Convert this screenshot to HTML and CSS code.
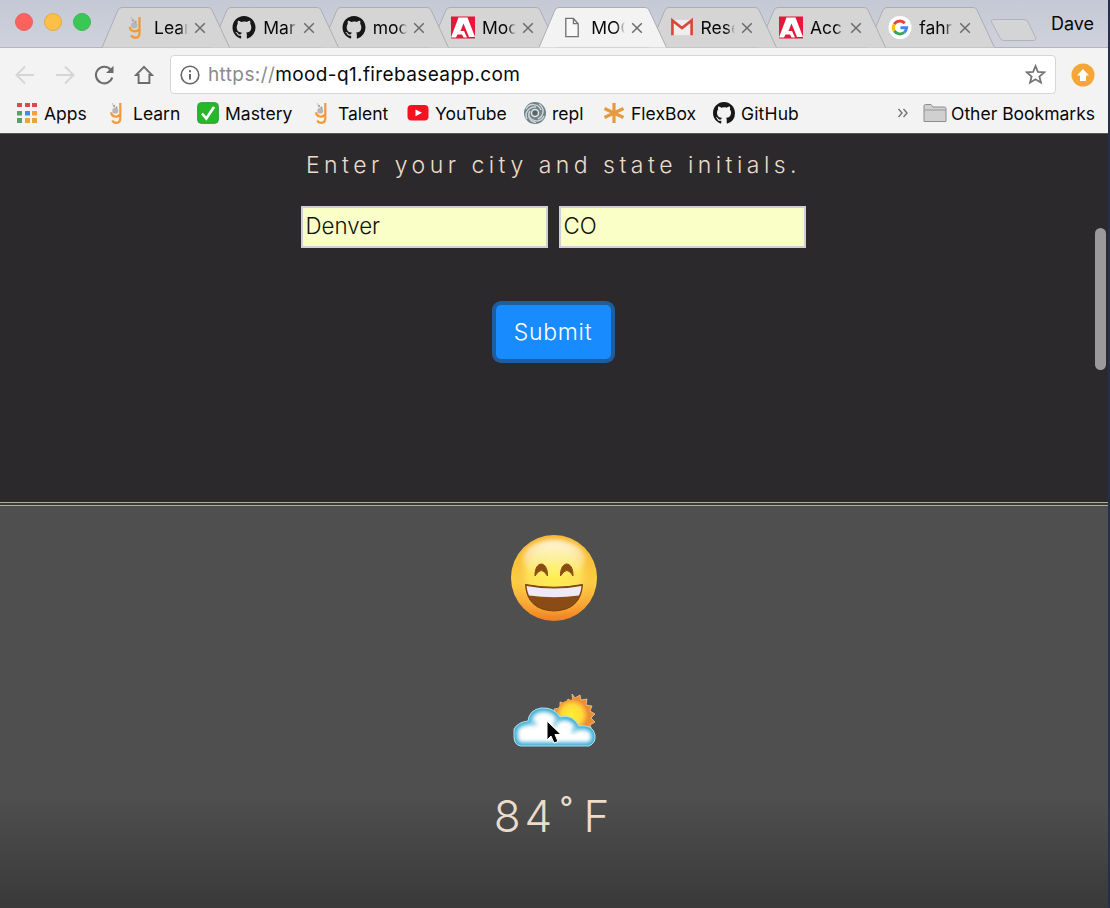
FILE: index.html
```html
<!DOCTYPE html>
<html lang="en">
<head>
<meta charset="utf-8">
<title>Mood</title>
<link rel="stylesheet" href="styles.css">
</head>
<body>
<svg class="defs" width="0" height="0" aria-hidden="true">
  <defs>
    <linearGradient id="face" x1="0" y1="0" x2="0" y2="1"><stop offset="0" stop-color="#f6b52c"/><stop offset=".55" stop-color="#fbd244"/><stop offset=".8" stop-color="#f9a736"/><stop offset="1" stop-color="#ee7f20"/></linearGradient>
    <radialGradient id="glow" cx=".5" cy=".45" r=".5"><stop offset="0" stop-color="#fff04f"/><stop offset=".6" stop-color="#fde65c" stop-opacity=".8"/><stop offset="1" stop-color="#f9a336" stop-opacity="0"/></radialGradient>
    <linearGradient id="shine" x1="0" y1="0" x2="0" y2="1"><stop offset="0" stop-color="#fff" stop-opacity=".8"/><stop offset="1" stop-color="#fff" stop-opacity="0"/></linearGradient>
    <radialGradient id="sun"><stop offset="0" stop-color="#fff02e"/><stop offset=".65" stop-color="#ffd93b"/><stop offset="1" stop-color="#f19a35"/></radialGradient>
    <filter id="soft" x="-10%" y="-10%" width="120%" height="120%"><feGaussianBlur stdDeviation="2.3"/></filter>
    <clipPath id="cloudclip"><path d="M8 53Q1 52 1 44V36Q5 29 15 28Q16 17 28 15Q41 14 47 24Q60 21 66 33Q80 31 82 42Q83 50 76 53Z"/></clipPath>
  </defs>
  <symbol id="cat" viewBox="0 0 16 16"><path d="M8 0C3.58 0 0 3.58 0 8c0 3.54 2.29 6.53 5.47 7.59.4.07.55-.17.55-.38 0-.19-.01-.82-.01-1.49-2.01.37-2.53-.49-2.69-.94-.09-.23-.48-.94-.82-1.13-.28-.15-.68-.52-.01-.53.63-.01 1.08.58 1.23.82.72 1.21 1.87.87 2.33.66.07-.52.28-.87.51-1.07-1.78-.2-3.64-.89-3.64-3.95 0-.87.31-1.59.82-2.15-.08-.2-.36-1.02.08-2.12 0 0 .67-.21 2.2.82A7.6 7.6 0 0 1 8 3.87c.68 0 1.36.09 2 .27 1.53-1.04 2.2-.82 2.2-.82.44 1.1.16 1.92.08 2.12.51.56.82 1.27.82 2.15 0 3.07-1.87 3.75-3.65 3.95.29.25.54.73.54 1.48 0 1.07-.01 1.93-.01 2.2 0 .21.15.46.55.38A8.01 8.01 0 0 0 16 8c0-4.42-3.58-8-8-8Z" fill="#171717"/></symbol>
  <symbol id="flask" viewBox="0 0 22 22"><path d="M15.300 1v15c0 3-1.300 4.800-4 4.800-2 0-3.400-1-4-2.300" fill="none" stroke="#f39a36" stroke-width="2.200"/><path d="M15 12.500c-2.500 3.500-8.800 2.500-8.800-2.300" fill="none" stroke="#f39a36" stroke-width="2.200"/><circle cx="10.300" cy="8.800" r="3" fill="#b5b7b8"/><circle cx="9" cy="4" r="1.200" fill="#aaa"/><circle cx="11.500" cy="5.500" r="1" fill="#999"/><circle cx="7.500" cy="2" r=".8" fill="#bbb"/></symbol>
  <symbol id="adobe" viewBox="0 0 24 22"><path d="M0 0h24v22H0z" fill="#e6173a"/><path d="M7.500 1h9L24 20.500h-6L12.500 7 9.500 14.500H13l3 6.500h-3.500l-1.500-3H6.500L5 21H0z" fill="#fff"/></symbol>
  <symbol id="gmail" viewBox="0 0 22 18"><path d="M1 2h20v14H1z" fill="#eee"/><path d="M2.200 16V2.500L11 9.500l8.800-7V16" fill="none" stroke="#dc4437" stroke-width="2.400"/></symbol>
  <symbol id="google" viewBox="0 0 48 48"><circle cx="24" cy="24" r="24" fill="#fff"/><g fill="none" stroke-width="6"><path d="M34 15A14 14 0 0 0 12 17" stroke="#ea4335"/><path d="M12 17A14 14 0 0 0 12 31" stroke="#fbbc05"/><path d="M12 31A14 14 0 0 0 33 34" stroke="#34a853"/><path d="M33 34A14 14 0 0 0 38 24.500H25" stroke="#4285f4"/></g></symbol>
  <symbol id="page" viewBox="0 0 18 22"><path d="M2.500 1.500h8l5 5.500v13.500h-13zM10.500 1.500V7h5" fill="#f8f8f8" stroke="#727272" stroke-width="1.400"/></symbol>
  <symbol id="x" viewBox="0 0 12 12"><path d="M1.200 1.200l9.600 9.600M10.800 1.200l-9.600 9.600" stroke="#6b6b6b" stroke-width="1.500"/></symbol>
  <symbol id="tabshape" viewBox="0 0 128 41"><path d="M0 40.500L16 3Q17 .5 20 .5H106Q109 .5 110 3L127.500 40.500" stroke="#acaeb2"/></symbol>
</svg>

<div class="window">
  <header class="strip">
    <div class="lights"><i class="red"></i><i class="yellow"></i><i class="green"></i></div>
    <nav class="tabs">
      <div class="tab t1"><svg class="shape"><use href="#tabshape"/></svg><svg class="fav"><use href="#flask"/></svg><span>Lear</span><svg class="close"><use href="#x"/></svg></div>
      <div class="tab t2"><svg class="shape"><use href="#tabshape"/></svg><svg class="fav"><use href="#cat"/></svg><span>Mark</span><svg class="close"><use href="#x"/></svg></div>
      <div class="tab t3"><svg class="shape"><use href="#tabshape"/></svg><svg class="fav"><use href="#cat"/></svg><span>moo</span><svg class="close"><use href="#x"/></svg></div>
      <div class="tab t4"><svg class="shape"><use href="#tabshape"/></svg><svg class="fav"><use href="#adobe"/></svg><span>Moo</span><svg class="close"><use href="#x"/></svg></div>
      <div class="tab active"><svg class="shape"><use href="#tabshape"/></svg><svg class="fav page"><use href="#page"/></svg><span>MOO</span><svg class="close"><use href="#x"/></svg></div>
      <div class="tab t6"><svg class="shape"><use href="#tabshape"/></svg><svg class="fav"><use href="#gmail"/></svg><span>Rese</span><svg class="close"><use href="#x"/></svg></div>
      <div class="tab t7"><svg class="shape"><use href="#tabshape"/></svg><svg class="fav"><use href="#adobe"/></svg><span>Acc</span><svg class="close"><use href="#x"/></svg></div>
      <div class="tab t8"><svg class="shape"><use href="#tabshape"/></svg><svg class="fav"><use href="#google"/></svg><span>fahr</span><svg class="close"><use href="#x"/></svg></div>
    </nav>
    <svg class="newtab" viewBox="0 0 48 24"><path d="M4 1.500H34Q37 1.500 38 4L45.500 19.500Q46.500 22.500 43 22.500H14Q11 22.500 10 20L1.500 4Q.5 1.500 4 1.500Z" fill="#d3d4d6" stroke="#b2b4b9"/></svg>
    <span class="user">Dave</span>
  </header>

  <div class="toolbar">
    <svg class="nav" viewBox="0 0 20 20"><path d="M19 10H2M10 1.500L1.500 10 10 18.500" fill="none" stroke="#d5d5d5" stroke-width="1.900"/></svg>
    <svg class="nav" viewBox="0 0 20 20"><path d="M1 10h17M10 1.500l8.500 8.500-8.500 8.500" fill="none" stroke="#d5d5d5" stroke-width="1.900"/></svg>
    <svg class="nav" viewBox="0 0 20 20"><path d="M16.500 4.500A8.300 8.300 0 1 0 18.200 12.500" fill="none" stroke="#6c6c6c" stroke-width="2.100"/><path d="M19.500.8V8h-7.500z" fill="#6c6c6c"/></svg>
    <svg class="nav" viewBox="0 0 20 20"><path d="M10 1.800L18 10h-2.600v8H4.600v-8H2z" fill="none" stroke="#6c6c6c" stroke-width="1.900"/></svg>
    <div class="address">
      <svg class="info" viewBox="0 0 20 20"><circle cx="10" cy="10" r="8.800" fill="none" stroke="#666" stroke-width="1.600"/><path d="M10 9v5.500M10 5.200v2.100" stroke="#666" stroke-width="2"/></svg>
      <div class="url"><span>https://</span>mood-q1.firebaseapp.com</div>
      <svg class="star" viewBox="0 0 20 20"><path d="M10 2l2.300 5.600 6 .4-4.600 3.900 1.500 5.900L10 14.600l-5.200 3.200 1.500-5.900L1.700 8l6-.4z" fill="none" stroke="#757575" stroke-width="1.700"/></svg>
    </div>
    <svg class="update" viewBox="0 0 24 24"><circle cx="12" cy="12" r="11.500" fill="#f5a637"/><path d="M12 6l6 6.500h-3V18H9v-5.500H6z" fill="#fff"/></svg>
  </div>

  <nav class="bookmarks">
    <div><svg viewBox="0 0 22 22"><g fill="#d84a53"><path d="M1 1h5v4H1zM9 1h5v4H9zM16 1h5v4h-5z"/></g><path d="M1 9h5v4.500H1zM1 16h5v5H1z" fill="#4fa66b"/><path d="M9 9h5v4.500H9z" fill="#3d8fe6"/><path d="M16 9h5v4.500h-5zM9 16h5v5H9zM16 16h5v5h-5z" fill="#eba43d"/></svg><span>Apps</span></div>
    <div><svg><use href="#flask"/></svg><span>Learn</span></div>
    <div><svg viewBox="0 0 22 22"><rect x=".7" y=".7" width="20.600" height="20.600" rx="3.500" fill="#27b829" stroke="#239c32"/><path d="M5 11.500l4.300 5L17 5" fill="none" stroke="#fff" stroke-width="2.600"/></svg><span>Mastery</span></div>
    <div><svg><use href="#flask"/></svg><span>Talent</span></div>
    <div><svg viewBox="0 0 22 22"><rect x=".5" y="3" width="21" height="15.500" rx="4" fill="#f5121f"/><path d="M8.500 7.500l6.500 3.300-6.500 3.400z" fill="#fff"/></svg><span>YouTube</span></div>
    <div><svg viewBox="0 0 22 22"><circle cx="11" cy="11" r="11" fill="#71828a"/><g fill="none" stroke="#cbd3d4" stroke-width="1.500"><path d="M2 7C5 1 14 1 17 8"/><path d="M3 17C0 11 5 4 12 5"/><path d="M12 20.500C6 20 3 14 6 9"/><path d="M20 14c-3 7-12 6-15 0"/><path d="M15 2c6 4 5 12-1 15"/></g><circle cx="11" cy="11" r="3.500" fill="#56656c" stroke="#e1e6e6" stroke-width="1.500"/></svg><span>repl</span></div>
    <div><svg viewBox="0 0 22 22"><path d="M11 1v20M1.500 6.500l19 9M20.500 6.500l-19 9" stroke="#e69a3c" stroke-width="3.200"/></svg><span>FlexBox</span></div>
    <div><svg><use href="#cat"/></svg><span class="gh">GitHub</span></div>
    <div><svg class="more" viewBox="0 0 12 12"><path d="M1.500 2l3.500 4-3.500 4M6.500 2l3.500 4-3.500 4" fill="none" stroke="#737373" stroke-width="1.400"/></svg></div>
    <div><svg class="folder" viewBox="0 0 24 20"><path d="M1 18.500V3Q1 1.500 2.500 1.500H8l2 2.500h11.500Q23 4 23 5.500v13z" fill="#d0d0d0" stroke="#8d8d8d"/><path d="M1 7h22" stroke="#979797"/></svg><span>Other Bookmarks</span></div>
  </nav>

  <main>
    <section class="ask">
      <p class="prompt">Enter your city and state initials.</p>
      <form class="fields">
        <input type="text" value="Denver"><input type="text" value="CO">
      </form>
      <button type="button">Submit</button>
      <div class="thumb"></div>
    </section>
    <section class="result">
      <svg class="emoji" viewBox="0 0 88 88">
        <circle cx="44" cy="44" r="43" fill="url(#face)"/><circle cx="44" cy="44" r="43" fill="url(#glow)"/>
        <ellipse cx="44" cy="25" rx="31" ry="19" fill="url(#shine)" filter="url(#soft)"/>
        <path d="M25 42C24.500 26 38 26 37.500 42Q31.500 31 25 42ZM50.500 42C50 26 63.500 26 63 42Q57 31 50.500 42Z" fill="#8a4d10" stroke="#8a4d10" stroke-width="1" stroke-linejoin="round"/>
        <path d="M15.500 50.500Q44 56 72.500 50.500Q71 76 44 77Q17 76 15.500 50.500Z" fill="#8b4b14" stroke="#75400f" stroke-linejoin="round"/>
        <path d="M16.500 52Q44 57 71.500 52Q71 58 69 61.500Q44 65 19 61.500Q17 57 16.500 52Z" fill="#eeeaf3"/>
      </svg>
      <div class="weather">
        <svg viewBox="0 0 84 56">
          <path d="M59 1l3 4 5-3 1 5 6-1-1 6 6 1-2 5 5 3-4 4 4 4-5 3 2 5-6 1v5l-6-2-3 4-5-3-5 3-3-5-6 1 1-6-6-2 3-5-4-4 4-3-2-5 6-1v-6l6 2 2-5 5 3z" fill="#ee8e32" stroke="#f6d9a5" stroke-width=".7"/>
          <circle cx="59" cy="22" r="15.500" fill="url(#sun)"/>
          <path d="M8 53Q1 52 1 44V36Q5 29 15 28Q16 17 28 15Q41 14 47 24Q60 21 66 33Q80 31 82 42Q83 50 76 53Z" fill="#fff"/>
          <g clip-path="url(#cloudclip)"><path d="M8 53Q1 52 1 44V36Q5 29 15 28Q16 17 28 15Q41 14 47 24Q60 21 66 33Q80 31 82 42Q83 50 76 53Z" fill="none" stroke="#35a8d3" stroke-width="7" filter="url(#soft)"/><path d="M47 24Q42 28 42 34M66 33Q61 35 60 40M15 28Q19 28 23 32" fill="none" stroke="#62bddc" stroke-width="3" filter="url(#soft)"/></g>
          <path d="M8 53Q1 52 1 44V36Q5 29 15 28Q16 17 28 15Q41 14 47 24Q60 21 66 33Q80 31 82 42Q83 50 76 53Z" fill="none" stroke="#a9dfec"/>
        </svg>
        <svg class="cursor" viewBox="0 0 16 24"><path d="M1 1v19l4-4 3 7 4-1.500-3-7h6z" fill="#050505" stroke="#fff" stroke-width="1"/></svg>
      </div>
      <p class="temp">84<b>˚</b>F</p>
    </section>
  </main>
</div>
</body>
</html>
```
FILE: styles.css
```css
* { box-sizing: border-box; }
body { margin: 0; background: #26304d; font-family: Inter, "Open Sans", sans-serif; overflow: hidden; }
svg { display: block; flex: none; }
.defs { position: absolute; }
.window { width: 1108px; height: 908px; display: flex; flex-direction: column; overflow: hidden; }

.strip { height: 48px; flex: none; display: flex; align-items: flex-start; background: linear-gradient(#c5c9d5, #cfd2dc); border-bottom: 1px solid #b3b5b9; }
.lights { display: flex; gap: 11px; padding: 13px 0 0 15px; width: 102px; flex: none; }
.lights i { width: 18px; height: 18px; border-radius: 50%; }
.red { background: #fc625d; border: 1px solid #e5625f; }
.yellow { background: #fdbf45; border: 1px solid #dfaa4b; }
.green { background: #3ac755; border: 1px solid #41b858; }

.tabs { display: flex; padding-top: 7px; width: 892px; flex: none; }
.tab { width: 128px; height: 41px; flex: none; margin-right: -18.7px; position: relative; isolation: isolate; display: grid; grid-template-columns: 24px 33px 12px; column-gap: 8px; padding-left: 21px; align-items: center; font-size: 17.5px; color: #080808; }
.shape { position: absolute; left: 0; top: 0; width: 128px; height: 41px; fill: #d5d5d6; z-index: -1; }
.tab.active .shape { fill: #f3f3f3; }
.t1 { z-index: 8; } .t2 { z-index: 7; } .t3 { z-index: 6; } .t4 { z-index: 5; }
.active { z-index: 10; }
.t6 { z-index: 4; } .t7 { z-index: 3; } .t8 { z-index: 2; }
.fav { width: 24px; height: 23px; }
.fav.page { height: 21px; }
.tab span { overflow: hidden; white-space: nowrap; line-height: 24px; margin-left: -1px; -webkit-mask-image: linear-gradient(90deg, #000 75%, transparent 100%); mask-image: linear-gradient(90deg, #000 75%, transparent 100%); }
.close { width: 12px; height: 12px; margin-left: -2px; }
.newtab { width: 48px; height: 24px; margin: 18px 0 0 -4px; }
.user { font-size: 18px; line-height: 24px; margin: 12px 0 0 13px; color: #080808; }

.toolbar { height: 50px; flex: none; display: flex; align-items: center; padding: 3px 0 0 15px; background: #f3f3f3; }
.nav { width: 20px; height: 20px; margin-right: 20px; }
.nav:nth-child(3), .nav:nth-child(4) { transform: translateX(-1px); }
.address { width: 886px; height: 39px; flex: none; margin-left: -5px; background: #fff; border: 1px solid #d6d6d6; border-radius: 4px; display: flex; align-items: center; padding: 0 9px; }
.info { width: 20px; height: 20px; }
.url { flex: 1; margin-left: 8px; font-size: 19px; letter-spacing: .39px; color: #080808; white-space: nowrap; }
.url span { color: #8b8b8b; }
.star { width: 21px; height: 21px; }
.update { width: 24px; height: 24px; margin-left: 15px; }

.bookmarks { height: 36px; flex: none; display: grid; grid-template-columns: 89px 92px 113px 97px 117px 79px 110px 184px 26px 184px; padding: 0 0 5px 16px; background: #f3f3f3; border-bottom: 1px solid #555; }
.bookmarks div { display: flex; align-items: center; gap: 6px; white-space: nowrap; font-size: 17.500px; color: #080808; }
.bookmarks svg { width: 22px; height: 22px; }
.bookmarks .more { width: 12px; height: 12px; }
.bookmarks .folder { width: 24px; height: 20px; margin-right: -2px; }
.gh { letter-spacing: .15px; }

main { flex: 1; display: flex; flex-direction: column; color: #ebdccb; }
.ask { height: 368px; flex: none; background: #2c292c; display: flex; flex-direction: column; align-items: center; position: relative; padding-right: 2px; }
.prompt { margin: 15px 0 0; font-size: 23px; line-height: 32px; font-weight: 300; letter-spacing: 4.480px; white-space: nowrap; padding-left: 1px; }
.fields { display: flex; gap: 11px; margin-top: 25px; }
.fields input { width: 247px; height: 42px; background: #faffc8; border: 2px solid #cfcfd6; padding: 0 3px 3px; font: 300 22.300px Inter, sans-serif; color: #111; outline: none; }
button { width: 115px; height: 54px; margin-top: 57px; border: 0; border-radius: 5px; background: #188bff; box-shadow: 0 0 0 4px #205d9d; color: #fff; font: 300 23px Inter, sans-serif; letter-spacing: .7px; padding: 0; }
.thumb { position: absolute; right: 2px; top: 94px; width: 11px; height: 142px; border-radius: 6px; background: #9b999b; }
.result { flex: 1; border-top: 4px double #b0ad98; background: linear-gradient(#4f4f4f 0, #4f4f4f 72%, #393939 100%); display: flex; flex-direction: column; align-items: center; padding-right: 1px; }
.emoji { width: 88px; height: 88px; margin-top: 28px; }
.weather { margin: 71px 0 0 2px; position: relative; }
.weather svg { width: 84px; height: 56px; }
.weather .cursor { position: absolute; left: 33px; top: 27px; width: 16px; height: 24px; }
.temp { margin: 39px 0 0; font-size: 44px; line-height: 56px; font-weight: 300; letter-spacing: 4px; }
.temp b { font-weight: 300; margin: 0 7px 0 4px; }
```
